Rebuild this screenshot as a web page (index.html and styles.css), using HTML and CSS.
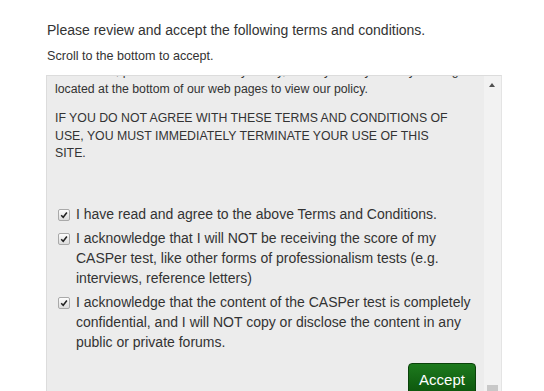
FILE: index.html
```html
<!DOCTYPE html>
<html>
<head>
<meta charset="utf-8">
<link rel="stylesheet" href="styles.css">
</head>
<body>
<div class="page">
  <h1 class="title">Please review and accept the following terms and conditions.</h1>
  <p class="sub">Scroll to the bottom to accept.</p>
  <div class="box">
    <div class="viewport">
      <div class="inner">
        <p class="terms lead">information, please see our Privacy Policy, which you may view by clicking the Privacy Policy link<br>located at the bottom of our web pages to view our policy.</p>
        <p class="terms">IF YOU DO NOT AGREE WITH THESE TERMS AND CONDITIONS OF USE, YOU MUST IMMEDIATELY TERMINATE YOUR USE OF THIS SITE.</p>
        <div class="checks">
          <label class="check"><span class="cb"><svg viewBox="0 0 10 10" width="8" height="8"><path d="M1.5 5.2 L4 7.8 L8.6 1.8" fill="none" stroke="#222" stroke-width="1.9"/></svg></span><span class="ctext">I have read and agree to the above Terms and Conditions.</span></label>
          <label class="check"><span class="cb"><svg viewBox="0 0 10 10" width="8" height="8"><path d="M1.5 5.2 L4 7.8 L8.6 1.8" fill="none" stroke="#222" stroke-width="1.9"/></svg></span><span class="ctext">I acknowledge that I will NOT be receiving the score of my CASPer test, like other forms of professionalism tests (e.g. interviews, reference letters)</span></label>
          <label class="check"><span class="cb"><svg viewBox="0 0 10 10" width="8" height="8"><path d="M1.5 5.2 L4 7.8 L8.6 1.8" fill="none" stroke="#222" stroke-width="1.9"/></svg></span><span class="ctext">I acknowledge that the content of the CASPer test is completely confidential, and I will NOT copy or disclose the content in any public or private forums.</span></label>
        </div>
        <div class="actions"><button class="accept">Accept</button></div>
      </div>
    </div>
    <div class="scrollbar">
      <span class="arrow"></span>
      <span class="thumb"></span>
    </div>
  </div>
</div>
</body>
</html>
```
FILE: styles.css
```css
html, body {
  margin: 0;
  padding: 0;
  background: #fff;
  height: 391px;
  overflow: hidden;
}
body {
  font-family: "Liberation Sans", Arial, sans-serif;
  color: #333;
}
.page {
  padding: 21px 0 0 47px;
}
.title {
  font-size: 14px;
  font-weight: normal;
  margin: 0;
  line-height: 18px;
}
.sub {
  font-size: 12.6px;
  margin: 9px 0 0;
  line-height: 16px;
}
.box {
  margin: 11px 0 0 -1px;
  width: 454px;
  height: 330px;
  display: flex;
  border: 1px solid #dcdcdc;
  border-right: 1px solid #e4e4e4;
  background: #ececec;
}
.viewport {
  flex: 1;
  overflow: hidden;
}
.inner {
  margin-top: -13px;
  padding: 0 8px;
}
.terms {
  font-size: 12.3px;
  line-height: 17.5px;
  margin: 0 20px 12px 0;
}
.terms.lead {
  white-space: nowrap;
}
.checks {
  margin-top: 42px;
}
.check {
  display: flex;
  align-items: flex-start;
  font-size: 14px;
  line-height: 19.7px;
  margin-bottom: 5px;
}
.cb {
  flex: none;
  width: 10px;
  height: 10px;
  margin: 4px 6px 0 3px;
  border: 1px solid #a9a9a9;
  border-radius: 2px;
  background: linear-gradient(#fdfdfd, #dcdcdc);
  display: flex;
  align-items: center;
  justify-content: center;
}
.actions {
  display: flex;
  justify-content: flex-end;
  padding: 6px 0 0 0;
}
.accept {
  font-family: "Liberation Sans", Arial, sans-serif;
  font-size: 15px;
  color: #fff;
  background: linear-gradient(#1d7a1d, #0b520b);
  border: 1px solid #0a420a;
  border-radius: 4px;
  padding: 7px 0 8px;
  width: 68px;
}
.scrollbar {
  width: 17px;
  flex: none;
  background: #f2f2f2;
  position: relative;
}
.arrow {
  position: absolute;
  left: 5px;
  top: 7px;
  width: 0;
  height: 0;
  border-left: 3px solid transparent;
  border-right: 3px solid transparent;
  border-bottom: 4px solid #505050;
}
.thumb {
  position: absolute;
  left: 3px;
  top: 309px;
  width: 11px;
  height: 30px;
  background: #c8c8c8;
}
```
